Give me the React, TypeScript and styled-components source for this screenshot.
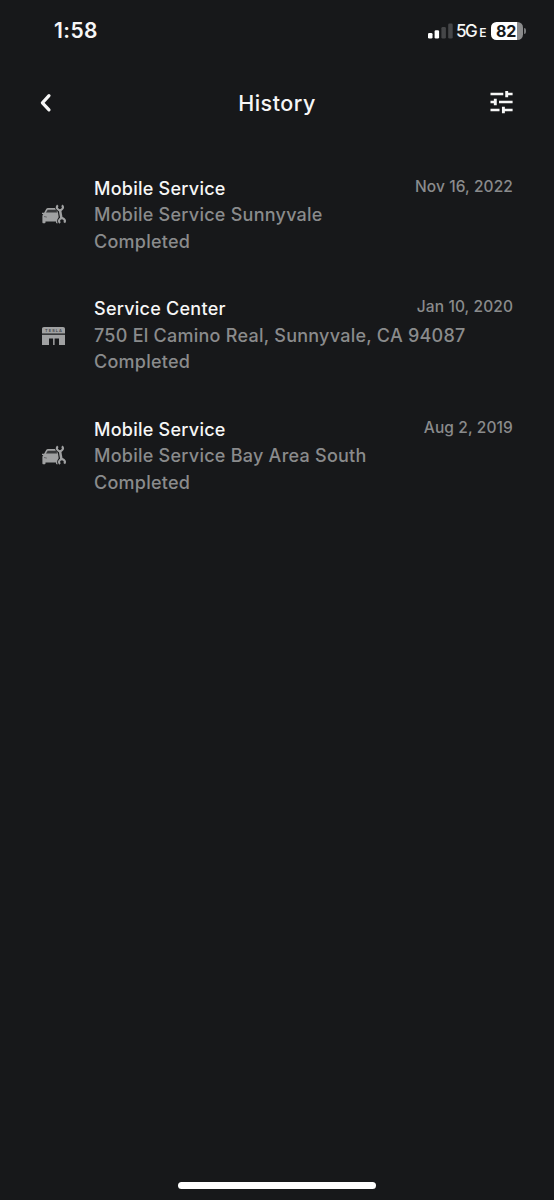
import React from "react";
import styled, { createGlobalStyle } from "styled-components";

const GlobalStyle = createGlobalStyle`
  * { box-sizing: border-box; }
  body { margin: 0; background: #17181a; }
`;

const Screen = styled.main`
  display: flex;
  flex-direction: column;
  width: 554px;
  height: 1200px;
  background: #17181a;
  color: #f6f6f6;
  font-family: Inter, "Liberation Sans", sans-serif;
  overflow: hidden;
`;

const StatusBar = styled.div`
  display: flex;
  align-items: center;
  justify-content: space-between;
  height: 61px;
  padding: 0 28.5px 0 54px;
`;

const Clock = styled.span`
  font-size: 21px;
  font-weight: 600;
  letter-spacing: 0.4px;
`;

const StatusIcons = styled.div`
  display: flex;
  align-items: center;
`;

const Network = styled.span`
  display: flex;
  align-items: baseline;
  gap: 3px;
  margin-left: 3.5px;
  width: 34.5px;
  font-size: 17px;
  font-weight: 500;
  letter-spacing: -1.5px;
  white-space: nowrap;

  small {
    font-size: 12px;
    font-weight: 600;
    letter-spacing: 0;
  }
`;

const Battery = styled.div`
  display: flex;
  align-items: center;
  justify-content: center;
  width: 32px;
  height: 18px;
  padding-right: 1px;
  border-radius: 5.5px;
  background: linear-gradient(90deg, #fff 0 26px, #8b8b8c 26px);
  color: #17181a;
  font-size: 16px;
  font-weight: 700;
  letter-spacing: -0.3px;
`;

const BatteryTip = styled.span`
  width: 2px;
  height: 6px;
  margin-left: 1px;
  border-radius: 0 2px 2px 0;
  background: #77787a;
`;

const Header = styled.header`
  display: grid;
  grid-template-columns: 60px 1fr 60px;
  align-items: center;
  height: 84px;
  padding: 0 37px;
`;

const Title = styled.h1`
  margin: 0;
  text-align: center;
  font-size: 21.5px;
  font-weight: 500;
  letter-spacing: 0.5px;
`;

const IconButton = styled.button<{ $end?: boolean }>`
  display: flex;
  justify-content: ${(p) => (p.$end ? "flex-end" : "flex-start")};
  padding: 0;
  border: 0;
  background: none;
  color: #f6f6f6;
`;

const List = styled.ul`
  display: flex;
  flex-direction: column;
  gap: 39.5px;
  margin: 0;
  padding: 29.6px 41px 0;
  list-style: none;
  flex: 1;
`;

const Row = styled.li`
  display: grid;
  grid-template-columns: 53px 1fr auto;
  height: 81px;
`;

const RowIcon = styled.div`
  display: flex;
  align-items: center;
  color: #a0a1a2;
`;

const Line = styled.div<{ $primary?: boolean }>`
  height: 26.7px;
  line-height: 27px;
  font-size: 18px;
  font-weight: 500;
  letter-spacing: 0.25px;
  white-space: nowrap;
  color: ${(p) => (p.$primary ? "#f6f6f6" : "#8a8b8c")};
`;

const Details = styled.div`
  min-width: 0;
`;

const DateLabel = styled.time`
  height: 24px;
  line-height: 24px;
  font-size: 15.5px;
  font-weight: 500;
  letter-spacing: 0.1px;
  color: #8a8b8c;
`;

const HomeArea = styled.div`
  display: flex;
  justify-content: center;
  height: 18px;
`;

const HomeIndicator = styled.div`
  width: 198px;
  height: 7px;
  border-radius: 4px;
  background: #fff;
`;

const Signal = () => (
  <svg width="25" height="16" viewBox="0 0 25 16">
    <rect x="0" y="10" width="4.5" height="5.5" rx="1.3" fill="#fff" />
    <rect x="6.6" y="7.2" width="4.5" height="8.3" rx="1.3" fill="#fff" />
    <rect x="13.4" y="4" width="4.5" height="11.5" rx="1.3" fill="#454648" />
    <rect x="20.2" y="0.5" width="4.5" height="15" rx="1.3" fill="#454648" />
  </svg>
);

const Chevron = () => (
  <svg width="18" height="24" viewBox="0 0 18 24" fill="none">
    <path d="M12 4.7 5.4 11.8l6.6 7" stroke="currentColor" strokeWidth="3.2" strokeLinecap="round" strokeLinejoin="round" />
  </svg>
);

const Sliders = () => (
  <svg width="27" height="24" viewBox="0 0 27 24" fill="none" stroke="currentColor" strokeWidth="2.6">
    <path d="M.5 3h12.8M.5 11h4M9 11h13.6M.5 19h9M14 19h8.6M17 3h5.6" />
    <path strokeWidth="2.9" d="M16.7-.2v6.4M5.3 7.8v6.4M13.4 15.8v6.4" />
  </svg>
);

const CarService = () => (
  <svg width="25" height="22" viewBox="0 0 25 22">
    <path
      fill="currentColor"
      d="M1 8.7h2.1L5.2 5C5.6 4.3 6.2 4 7 4h7.6c.9 0 1.5.3 1.8 1l2.2 4.2v9c0 .6-.4 1-1 1h-1.6c-.6 0-1-.4-1-1v-.8H4.5v.8c0 .6-.4 1-1 1H2.4c-.6 0-1-.4-1-1v-6.1c0-.9.3-1.5.9-2.1H1z"
    />
    <path fill="#17181a" opacity=".75" d="m4.9 8.6 1.5-2.4c.1-.3.3-.4.7-.4h7.3c.4 0 .6.1.7.4l1.3 2.4z" />
    <path stroke="#17181a" strokeWidth=".8" opacity=".55" fill="none" d="m3 12.5 2.8.6" />
    <g fill="none" stroke="#17181a">
      <path strokeWidth="4.6" d="m18.9 6 1.3 8.5" />
      <path strokeWidth="4" d="M16.8 1.2a2.9 2.9 0 1 0 4.2 0M19 19a2.8 2.8 0 1 1 4.2-.3" />
    </g>
    <g fill="none" stroke="currentColor">
      <path strokeWidth="2.5" d="m18.9 5.5 1.6 9.3" />
      <path strokeWidth="2.1" d="M16.8 1.2a2.9 2.9 0 1 0 4.2 0M19 19a2.8 2.8 0 1 1 4.2-.3" />
    </g>
  </svg>
);

const StoreSign = styled.text`
  font-family: Inter, sans-serif;
  font-size: 4px;
  font-weight: 600;
  fill: #45464a;
`;

const Storefront = () => (
  <svg width="25" height="18" viewBox="0 0 25 18">
    <path fill="currentColor" d="M3 0h19c1.3 0 2 .7 2 2v4.5H1V2C1 .7 1.7 0 3 0zM1 7.7h23V18h-6v-6.5h-4.4V18h-1.5v-6.5H8V18H1z" />
    <StoreSign x="4" y="4.7" textLength="17">
      TESLA
    </StoreSign>
  </svg>
);

type Visit = { kind: "mobile" | "center"; title: string; place: string; date: string };

const visits: Visit[] = [
  { kind: "mobile", title: "Mobile Service", place: "Mobile Service Sunnyvale", date: "Nov 16, 2022" },
  { kind: "center", title: "Service Center", place: "750 El Camino Real, Sunnyvale, CA 94087", date: "Jan 10, 2020" },
  { kind: "mobile", title: "Mobile Service", place: "Mobile Service Bay Area South", date: "Aug 2, 2019" },
];

const PlaceLine = styled(Line)`
  width: 0;
`;

export default function App() {
  return (
    <>
      <GlobalStyle />
      <Screen>
        <StatusBar>
          <Clock>1:58</Clock>
          <StatusIcons>
            <Signal />
            <Network>
              5G<small>E</small>
            </Network>
            <Battery>82</Battery>
            <BatteryTip />
          </StatusIcons>
        </StatusBar>
        <Header>
          <IconButton aria-label="Back">
            <Chevron />
          </IconButton>
          <Title>History</Title>
          <IconButton $end aria-label="Filter">
            <Sliders />
          </IconButton>
        </Header>
        <List>
          {visits.map((v) => (
            <Row key={v.date}>
              <RowIcon>{v.kind === "mobile" ? <CarService /> : <Storefront />}</RowIcon>
              <Details>
                <Line $primary>{v.title}</Line>
                <PlaceLine>{v.place}</PlaceLine>
                <Line>Completed</Line>
              </Details>
              <DateLabel>{v.date}</DateLabel>
            </Row>
          ))}
        </List>
        <HomeArea>
          <HomeIndicator />
        </HomeArea>
      </Screen>
    </>
  );
}
